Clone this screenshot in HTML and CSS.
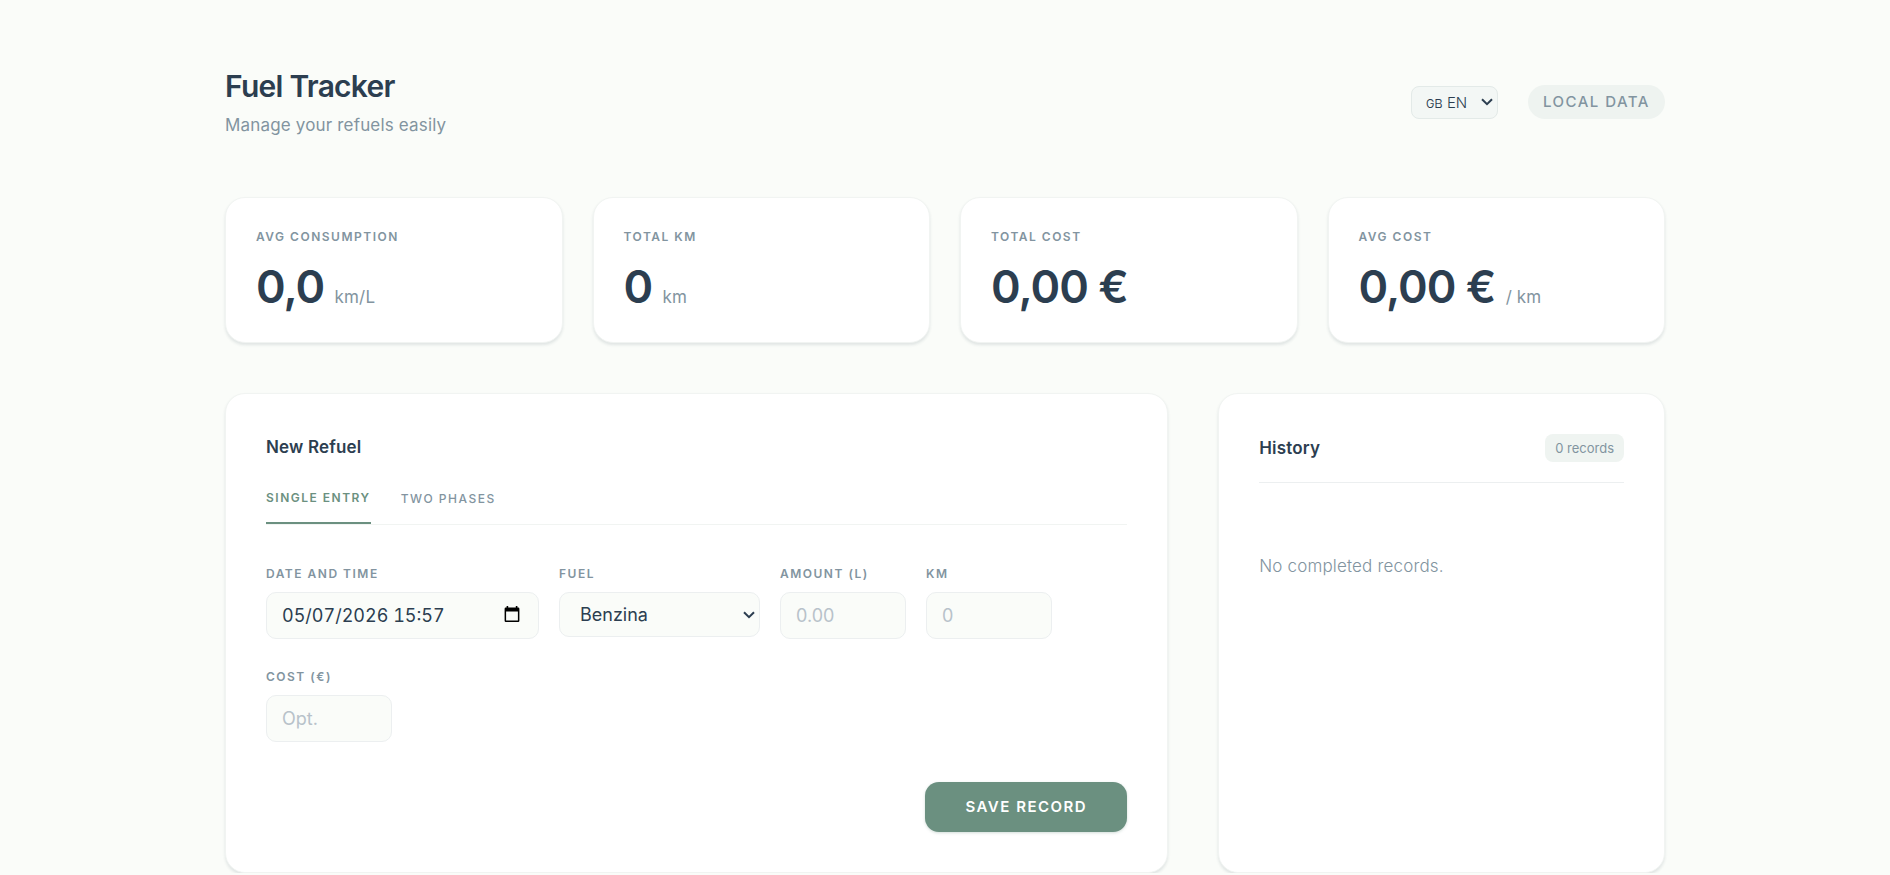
FILE: index.html
```html
<!DOCTYPE html>
<html lang="en">
<head>
    <meta charset="UTF-8">
    <meta name="viewport" content="width=device-width, initial-scale=1.0">
    <title>Fuel Tracker</title>
    <link rel="stylesheet" href="styles.css">
</head>
<body>
    <div class="container">
        <header class="header">
            <div>
                <h1>Fuel Tracker</h1>
                <p class="subtitle">Manage your refuels easily</p>
            </div>
            <div class="header-actions">
                <div class="select-wrap">
                    <select class="lang-select" id="langSelect" aria-label="Language">
                        <option value="en" selected>ɢʙ EN</option>
                        <option value="it">ɪᴛ IT</option>
                    </select>
                    <svg class="chevron" viewBox="0 0 12 8" aria-hidden="true"><path d="M1 1.2 6 6.2 11 1.2"/></svg>
                </div>
                <span class="status-badge">LOCAL DATA</span>
            </div>
        </header>

        <!-- Stats -->
        <section class="stats">
            <div class="card stat-card">
                <div class="stat-label">AVG CONSUMPTION</div>
                <div class="stat-value">0,0 <span class="unit">km/L</span></div>
            </div>
            <div class="card stat-card">
                <div class="stat-label">TOTAL KM</div>
                <div class="stat-value">0 <span class="unit">km</span></div>
            </div>
            <div class="card stat-card">
                <div class="stat-label">TOTAL COST</div>
                <div class="stat-value">0,00 €</div>
            </div>
            <div class="card stat-card">
                <div class="stat-label">AVG COST</div>
                <div class="stat-value">0,00 € <span class="unit">/ km</span></div>
            </div>
        </section>

        <main class="main-grid">
            <section class="card panel">
                <h2>New Refuel</h2>
                <div class="tabs">
                    <button type="button" class="tab active">SINGLE ENTRY</button>
                    <button type="button" class="tab">TWO PHASES</button>
                </div>
                <form class="refuel-form">
                    <div class="fields">
                        <div class="field field-date">
                            <label for="date">DATE AND TIME</label>
                            <div class="date-wrap">
                                <input type="text" id="date" value="05/07/2026 15:57">
                                <button type="button" class="date-btn" aria-label="Open calendar">
                                    <svg viewBox="0 0 16 17" aria-hidden="true"><path fill-rule="evenodd" d="M2.600 0h1.600v1.600h7.600V0h1.600v1.600h.8a1.200 1.200 0 0 1 1.200 1.200v12a1.200 1.200 0 0 1-1.200 1.200H1.800A1.200 1.200 0 0 1 .6 14.800v-12a1.200 1.200 0 0 1 1.200-1.200h.8zM2.100 5.400v9.100h11.800V5.400z"/></svg>
                                </button>
                            </div>
                        </div>
                        <div class="field field-fuel">
                            <label for="fuel">FUEL</label>
                            <div class="select-wrap">
                                <select id="fuel">
                                    <option>Benzina</option>
                                    <option>Diesel</option>
                                    <option>GPL</option>
                                </select>
                                <svg class="chevron" viewBox="0 0 12 8" aria-hidden="true"><path d="M1 1.2 6 6.2 11 1.2"/></svg>
                            </div>
                        </div>
                        <div class="field">
                            <label for="liters">AMOUNT (L)</label>
                            <input type="text" id="liters" inputmode="decimal" placeholder="0.00">
                        </div>
                        <div class="field">
                            <label for="km">KM</label>
                            <input type="text" id="km" inputmode="numeric" placeholder="0">
                        </div>
                        <div class="field">
                            <label for="cost">COST (€)</label>
                            <input type="text" id="cost" inputmode="decimal" placeholder="Opt.">
                        </div>
                    </div>
                    <div class="form-actions">
                        <button type="submit" class="save-btn">SAVE RECORD</button>
                    </div>
                </form>
            </section>

            <section class="card panel">
                <div class="history-header">
                    <h2>History</h2>
                    <span class="count">0 records</span>
                </div>
                <p class="empty">No completed records.</p>
            </section>
        </main>
    </div>
</body>
</html>
```
FILE: styles.css
```css
:root {
    --bg: #fafcf9;
    --card: #ffffff;
    --text: #2c3e50;
    --muted: #8294a0;
    --accent: #6b9080;
    --soft: #eff4f1;
    --line: #eceff0;
}
* {
    box-sizing: border-box;
    margin: 0;
    padding: 0;
}
body {
    font-family: Inter, "Noto Sans", sans-serif;
    background: var(--bg);
    color: var(--text);
}
button, input, select {
    font-family: inherit;
    color: inherit;
}
.container {
    max-width: 1520px;
    margin: 0 auto;
    padding: 64px 40px 0;
}

/* Header */
.header {
    display: flex;
    justify-content: space-between;
    align-items: center;
    margin-bottom: 55px;
}
h1 {
    font-size: 30px;
    font-weight: 600;
    line-height: 44px;
    letter-spacing: -0.025em;
}
.subtitle {
    font-size: 17px;
    line-height: 34px;
    letter-spacing: 0.01em;
    color: var(--muted);
}
.header-actions {
    display: flex;
    align-items: center;
    gap: 30px;
    padding-bottom: 2px;
}
.status-badge {
    padding: 0 15px;
    border-radius: 20px;
    background: #eef3f0;
    color: var(--muted);
    font-size: 15px;
    font-weight: 500;
    line-height: 34px;
    letter-spacing: 1.5px;
}
.select-wrap {
    position: relative;
}
.select-wrap select {
    appearance: none;
}
.chevron {
    position: absolute;
    top: 50%;
    right: 5px;
    width: 12px;
    height: 8px;
    margin-top: -4px;
    fill: none;
    stroke: var(--text);
    stroke-width: 2;
    pointer-events: none;
}
.lang-select {
    display: block;
    width: 87px;
    height: 33px;
    padding: 0 14px;
    border: 1px solid #e3eae8;
    border-radius: 8px;
    background: #f3f7f5;
    font-size: 15px;
    font-weight: 300;
}

/* Cards */
.card {
    background: var(--card);
    border: 1px solid #f1f4f2;
    border-radius: 20px;
    box-shadow: 0 2px 3px rgba(44, 62, 80, 0.12);
}
.stats {
    display: grid;
    grid-template-columns: repeat(4, 1fr);
    gap: 30px;
    margin-bottom: 50px;
}
.stat-card {
    padding: 30px;
}
.stat-label {
    font-size: 12px;
    font-weight: 600;
    line-height: 18px;
    letter-spacing: 1.5px;
    color: var(--muted);
}
.stat-value {
    margin-top: 16px;
    font-size: 45px;
    font-weight: 600;
    line-height: 50px;
    letter-spacing: -1px;
}
.unit {
    font-size: 17px;
    font-weight: 400;
    line-height: 20px;
    letter-spacing: 0.01em;
    color: var(--muted);
}

/* Main area */
.main-grid {
    display: grid;
    grid-template-columns: 19fr 9fr;
    gap: 50px;
}
.panel {
    padding: 40px;
}
h2 {
    font-size: 17px;
    font-weight: 600;
    line-height: 26px;
    letter-spacing: 0.01em;
}
.tabs {
    display: flex;
    gap: 30px;
    margin-top: 18px;
    border-bottom: 1px solid #f1f4f2;
}
.tab {
    padding: 0 0 4px;
    border: none;
    background: none;
    color: var(--muted);
    font-size: 12px;
    font-weight: 500;
    line-height: 40px;
    letter-spacing: 1.5px;
    cursor: pointer;
}
.tab.active {
    border-bottom: 2px solid var(--accent);
    color: var(--accent);
    font-weight: 600;
}
.fields {
    display: flex;
    flex-wrap: wrap;
    align-items: flex-start;
    gap: 28px 20px;
    margin-top: 39px;
}
.field {
    width: 126px;
}
.field-date {
    width: 273px;
}
.field-fuel {
    width: 201px;
}
.field label {
    display: block;
    margin-bottom: 8px;
    font-size: 12px;
    font-weight: 600;
    line-height: 20px;
    letter-spacing: 1.5px;
    color: var(--muted);
}
.field input,
.field select {
    display: block;
    width: 100%;
    height: 47px;
    padding: 0 15px;
    border: 1px solid var(--line);
    border-radius: 10px;
    background: var(--bg);
    font-size: 18px;
}
.field select {
    height: 45px;
    padding: 0 20px;
}
.field input::placeholder {
    color: #b8c2ca;
}
.date-wrap {
    position: relative;
}
.date-wrap input {
    font-variant-numeric: tabular-nums;
}
.date-btn {
    position: absolute;
    top: 14px;
    right: 19px;
    width: 16px;
    height: 17px;
    border: none;
    background: none;
    cursor: pointer;
}
.date-btn svg {
    display: block;
    fill: #000;
}
.form-actions {
    display: flex;
    justify-content: flex-end;
    margin-top: 40px;
}
.save-btn {
    padding: 0 40px;
    border: none;
    border-radius: 14px;
    background: var(--accent);
    color: #fff;
    font-size: 15px;
    font-weight: 600;
    line-height: 50px;
    letter-spacing: 1.5px;
    box-shadow: 0 1px 3px rgba(107, 144, 128, 0.3);
    cursor: pointer;
}

/* History */
.history-header {
    display: flex;
    justify-content: space-between;
    align-items: center;
    padding-bottom: 20px;
    border-bottom: 1px solid var(--line);
}
.count {
    padding: 0 10px;
    border-radius: 8px;
    background: var(--soft);
    color: var(--muted);
    font-size: 13px;
    line-height: 28px;
}
.empty {
    margin-top: 70px;
    font-size: 17px;
    font-weight: 300;
    line-height: 26px;
    letter-spacing: 0.01em;
    color: var(--muted);
}
```
